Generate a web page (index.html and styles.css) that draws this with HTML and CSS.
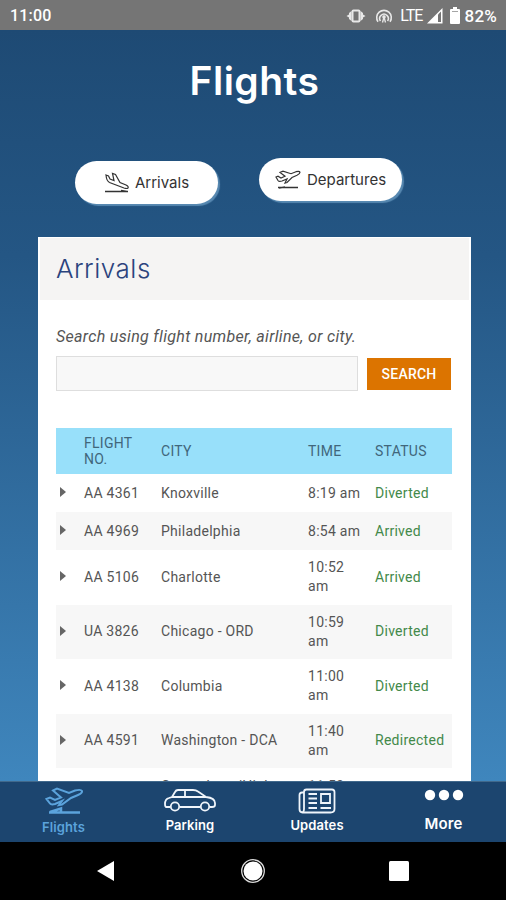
FILE: index.html
```html
<!DOCTYPE html>
<html lang="en">
<head>
    <meta charset="UTF-8">
    <title>Flights</title>
    <link rel="stylesheet" href="styles.css">
</head>
<body>
    <div class="status-bar">
        <span class="clock">11:00</span>
        <div class="status-icons">
            <svg class="vibrate" width="20" height="16" viewBox="0 0 20 16">
                <rect x="6.500" y="2.500" width="7" height="11" rx="1" fill="none" stroke="#e8e8e8" stroke-width="2"/>
                <path d="M5.500 3v10L3 11V9.500L0.500 8L3 6.500V5zM14.500 3v10l2.500-2V9.500l2.500-1.500L17 6.500V5z" fill="#e8e8e8"/>
            </svg>
            <svg class="hotspot" width="18" height="16" viewBox="0 0 18 16">
                <path d="M3 13.800A7.300 7.300 0 1 1 15 13.800M5.500 13A4.300 4.300 0 1 1 12.500 13" fill="none" stroke="#e8e8e8" stroke-width="1.600"/>
                <path d="M7.500 14.500L9 9l1.500 5.500" fill="none" stroke="#e8e8e8" stroke-width="1.300"/>
                <circle cx="9" cy="9" r="1.800" fill="#e8e8e8"/>
            </svg>
            <span class="lte">LTE</span>
            <svg class="signal" width="16" height="16" viewBox="0 0 16 16">
                <path d="M0 15.500L15.500 0v15.500z" fill="#fff"/>
                <path d="M11 6.500L14 3.500V14H11z" fill="#757575"/>
            </svg>
            <svg class="battery" width="10" height="17" viewBox="0 0 10 17">
                <path d="M3 0h4v2h2a1 1 0 0 1 1 1v13a1 1 0 0 1-1 1H1a1 1 0 0 1-1-1V3a1 1 0 0 1 1-1h2z" fill="#fff"/>
                <path d="M2 4.500h6" stroke="#a5a5a5"/>
            </svg>
            <span class="percent">82%</span>
        </div>
    </div>

    <main class="screen">
        <h1>Flights</h1>
        <div class="switch">
            <button class="pill arrivals">
                <svg width="26" height="22" viewBox="0 0 26 22">
                    <path d="M2 3l2.500 1L6 7l4 1.500L8.500 1.500l3 1 4.500 8 6 2.500q3 1.500 2 3-1 1-4 0L5.500 10.500Q2.500 9 2 3z"/>
                    <path d="M1 19.500h23M17 18.500l6 1" stroke-width="1.500"/>
                </svg>
                <span>Arrivals</span>
            </button>
            <button class="pill departures">
                <svg width="26" height="20" viewBox="0 0 26 20">
                    <path d="M1 7l2-.8L6 8l4-1.800L5 2.500l3-1.300 8 2.500 5-2q3.500-1 4 .5 0 1.500-3 3L17 7.500l-5 5-2 .5 2-4-5 2q-3 1-4-.5z"/>
                    <path d="M3 17.500h20M4 18l6-1" stroke-width="1.500"/>
                </svg>
                <span>Departures</span>
            </button>
        </div>

        <section class="card">
            <h2>Arrivals</h2>
            <div class="card-body">
                <label for="search">Search using flight number, airline, or city.</label>
                <form class="search">
                    <input type="text" id="search" name="search">
                    <button type="button">SEARCH</button>
                </form>
                <div class="flights">
                    <div class="row head"><span></span><span>FLIGHT<br>NO.</span><span>CITY</span><span>TIME</span><span>STATUS</span></div>
                    <div class="row"><i></i><span>AA 4361</span><span>Knoxville</span><span>8:19 am</span><span class="state">Diverted</span></div>
                    <div class="row"><i></i><span>AA 4969</span><span>Philadelphia</span><span>8:54 am</span><span class="state">Arrived</span></div>
                    <div class="row tall"><i></i><span>AA 5106</span><span>Charlotte</span><span>10:52<br>am</span><span class="state">Arrived</span></div>
                    <div class="row tall"><i></i><span>UA 3826</span><span>Chicago - ORD</span><span>10:59<br>am</span><span class="state">Diverted</span></div>
                    <div class="row tall"><i></i><span>AA 4138</span><span>Columbia</span><span>11:00<br>am</span><span class="state">Diverted</span></div>
                    <div class="row tall"><i></i><span>AA 4591</span><span>Washington - DCA</span><span>11:40<br>am</span><span class="state">Redirected</span></div>
                    <div class="row tall last"><i></i><span>Greensboro/High<br>Point</span><span>11:53<br>am</span></div>
                </div>
            </div>
        </section>
    </main>

    <nav class="tabs">
        <a class="tab flights-tab active">
            <svg width="38" height="28" viewBox="0 0 38 28">
                <path d="M1.500 12l3.500-1.500 5 2.500 6-2.500L8 3.500 12 1.500l12 4.500 6-2.500q6-1.500 7 .5.500 2-4 4L26 11l-9 6.500-3 .5 3-4-7 3q-4 1-5-.5z" stroke-width="2"/>
                <path d="M4 25.500h31M5 25l11-3.500v3" stroke-width="2.500"/>
            </svg>
            <span>Flights</span>
        </a>
        <a class="tab parking-tab">
            <svg width="52" height="23" viewBox="0 0 52 23">
                <path d="M6 18H2.500Q1 18 1 15q0-5 4-6l3-1 3-5q1-2 3-2h15q3 0 5 1.500L42 8q9 1 9 6v2q0 2-3 2h-2M16 18h20M8 8h34M21 1.500V8"/>
                <circle cx="11" cy="17.500" r="4.200"/>
                <circle cx="41" cy="17.500" r="4.200"/>
            </svg>
            <span>Parking</span>
        </a>
        <a class="tab updates-tab">
            <svg width="38" height="26" viewBox="0 0 38 26">
                <path d="M6 4.500H4Q1.500 4.500 1.500 7v14q0 3.500 3 3.500h28q4 0 4-3.500V4q0-2.500-2.500-2.500H8.500Q6 1.500 6 4v17q0 3.500-2.500 3"/>
                <path d="M10.500 6h8.500M10.500 10.500h8.500M10.500 15h8.500M10.500 20h8.500M22.500 20H33M23 6h9v9h-9z"/>
            </svg>
            <span>Updates</span>
        </a>
        <a class="tab more-tab">
            <svg width="40" height="12" viewBox="0 0 40 12">
                <g class="dots"><circle cx="6" cy="6" r="5.200"/><circle cx="20" cy="6" r="5.200"/><circle cx="34" cy="6" r="5.200"/></g>
            </svg>
            <span>More</span>
        </a>
    </nav>

    <div class="system-nav">
        <svg width="20" height="22" viewBox="0 0 20 22"><path d="M1 11L18 1v20z" fill="#fff"/></svg>
        <svg width="26" height="26" viewBox="0 0 26 26"><circle cx="13" cy="13" r="11.300" fill="none" stroke="#ddd" stroke-width="1.300"/><circle cx="13" cy="13" r="9.500" fill="#fff"/></svg>
        <svg width="20" height="20" viewBox="0 0 20 20"><rect width="20" height="20" rx="1.500" fill="#fff"/></svg>
    </div>
</body>
</html>
```
FILE: styles.css
```css
* {
    box-sizing: border-box;
}
body {
    margin: 0;
    width: 506px;
    height: 900px;
    overflow: hidden;
    display: flex;
    flex-direction: column;
    font-family: Roboto, sans-serif;
    color: #555;
}
h1, h2 {
    margin: 0;
    font-family: Inter, sans-serif;
}
button {
    border: none;
    padding: 0;
}
.status-bar {
    height: 30px;
    flex: none;
    display: flex;
    align-items: center;
    justify-content: space-between;
    padding: 1px 9px 0 10px;
    background: #757575;
    color: #fff;
    font-size: 16px;
    font-weight: 500;
}
.clock {
    letter-spacing: 0.2px;
}
.status-icons {
    display: flex;
    align-items: center;
}
.hotspot {
    margin-left: 9px;
}
.lte {
    margin-left: 7px;
    font-weight: 400;
    letter-spacing: -0.9px;
}
.signal {
    margin-left: 4px;
}
.battery {
    margin: 0 5px 0 7px;
}
.percent {
    font-size: 17px;
    letter-spacing: 0.2px;
}
.screen {
    flex: 1;
    min-height: 0;
    overflow: hidden;
    background: linear-gradient(#1e4a74, #245684 30%, #3f86bd);
}
h1 {
    padding: 27px 0 0 3px;
    height: 128px;
    color: #fff;
    font-size: 39px;
    font-weight: 600;
    line-height: 48px;
    letter-spacing: 0.5px;
    text-align: center;
}
.switch {
    display: flex;
    gap: 41px;
    padding-left: 75px;
    height: 79px;
}
.pill {
    display: flex;
    align-items: center;
    width: 143px;
    height: 43px;
    border-radius: 22px;
    background: #fff;
    box-shadow: 2px 2px 1px #5889b1;
    color: #333;
    font: 400 15px Inter, sans-serif;
}
.arrivals {
    margin-top: 3px;
    padding-left: 29px;
    gap: 5px;
}
.departures {
    padding-left: 16px;
    gap: 6px;
}
.pill svg {
    fill: none;
    stroke: #333;
    stroke-width: 1.2;
}
.card {
    margin: 0 35px 0 38px;
    height: 620px;
    background: #fff;
}
h2 {
    height: 63px;
    padding-left: 16px;
    border: solid #fff;
    border-width: 1px 2px 0;
    background: #f5f4f3;
    color: #2b437d;
    font-size: 26px;
    font-weight: 300;
    line-height: 62px;
    letter-spacing: 0.5px;
}
.card-body {
    padding: 26px 19px 0 18px;
}
label {
    display: block;
    height: 30px;
    font-size: 16px;
    font-style: italic;
    line-height: 22px;
    letter-spacing: 0.32px;
}
.search {
    display: flex;
    align-items: center;
    justify-content: space-between;
    height: 35px;
    margin-bottom: 37px;
}
.search input {
    width: 302px;
    height: 35px;
    border: 1px solid #dedede;
    background: #f8f8f8;
}
.search button {
    width: 84px;
    height: 32px;
    margin-right: 1px;
    background: #dc7400;
    color: #fff;
    font: 500 14px Roboto, sans-serif;
    letter-spacing: 0.2px;
}
.row {
    display: grid;
    grid-template-columns: 28px 77px 147px 67px 1fr;
    align-items: center;
    height: 38px;
    font-size: 14px;
    line-height: 19px;
    letter-spacing: 0.27px;
}
.row:nth-child(odd) {
    background: #f7f7f7;
}
.row.tall {
    height: 54.5px;
}
.row.last {
    grid-template-columns: 105px 147px 1fr;
    height: 55.5px;
    background: #fff;
}
.row.head {
    height: 46px;
    background: #98e0fa;
    color: #41667b;
    line-height: 16px;
}
.row i {
    width: 0;
    height: 0;
    margin: -2px 0 0 4px;
    border: solid transparent;
    border-width: 5px 0 5px 6px;
    border-left-color: #666;
}
.row.last i {
    visibility: hidden;
}
.state {
    color: #43894a;
}
.tabs {
    flex: none;
    display: flex;
    height: 61px;
    background: #1c456f;
    border-top: 1px solid #41698c;
    color: #fff;
    font: 600 13px Inter, sans-serif;
    letter-spacing: 0.1px;
}
.tab {
    display: flex;
    flex-direction: column;
    align-items: center;
    justify-content: space-between;
}
.tab svg {
    fill: none;
    stroke: #f0f5fb;
    stroke-width: 1.8;
}
.flights-tab {
    width: 127px;
    padding: 5px 0 7px;
}
.parking-tab {
    width: 126px;
    padding: 7px 0 9px;
}
.updates-tab {
    width: 128px;
    padding: 6px 0 9px;
}
.more-tab {
    flex: 1;
    padding: 7px 0 9px;
    font-size: 15px;
}
.tab.active {
    color: #5ba3dc;
}
.tab.active svg {
    stroke: #5ba3dc;
}
.tab .dots {
    fill: #fff;
    stroke: none;
}
.system-nav {
    flex: none;
    display: flex;
    align-items: center;
    justify-content: space-between;
    height: 58px;
    padding: 0 97px 0 96px;
    background: #000;
}
```
